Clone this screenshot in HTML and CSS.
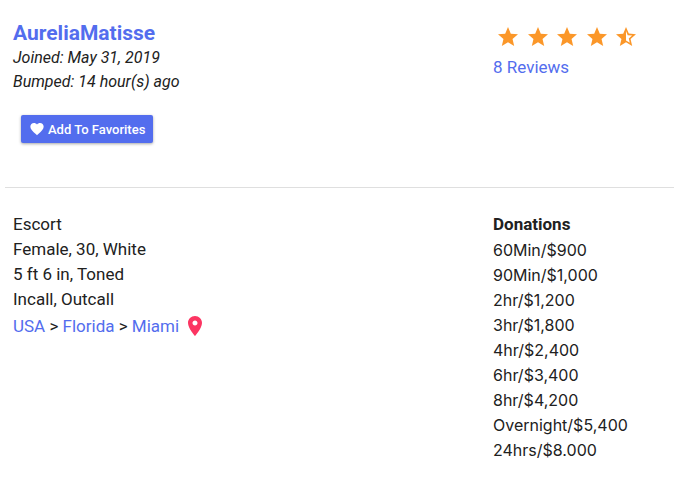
FILE: index.html
```
<!DOCTYPE html>
<html lang="en">
<head>
    <meta charset="UTF-8">
    <meta name="viewport" content="width=device-width, initial-scale=1">
    <title>AureliaMatisse</title>
    <link rel="stylesheet" href="styles.css">
</head>
<body>
    <!-- shared icon shapes -->
    <svg class="sprite" aria-hidden="true">
        <symbol id="star" viewBox="0 0 24 24">
            <path d="M12 17.27L18.18 21l-1.64-7.03L22 9.24l-7.19-.61L12 2 9.19 8.63 2 9.24l5.46 4.73L5.82 21z"/>
        </symbol>
        <symbol id="star-half" viewBox="0 0 24 24">
            <path d="M22 9.24l-7.19-.62L12 2 9.19 8.63 2 9.24l5.46 4.73L5.82 21 12 17.27 18.18 21l-1.63-7.03L22 9.24zM12 15.4V6.1l1.71 4.04 4.38.38-3.32 2.88 1 4.28L12 15.4z"/>
        </symbol>
    </svg>

    <header class="profile-header">
        <div class="profile">
            <h1><a href="#">AureliaMatisse</a></h1>
            <p class="meta">Joined: May 31, 2019</p>
            <p class="meta">Bumped: 14 hour(s) ago</p>
            <button type="button" class="favorite-btn">
                <svg viewBox="0 0 24 24" aria-hidden="true"><path d="M12 21.35l-1.45-1.32C5.4 15.36 2 12.28 2 8.5 2 5.42 4.42 3 7.5 3c1.74 0 3.41.81 4.5 2.09C13.09 3.81 14.76 3 16.5 3 19.58 3 22 5.42 22 8.5c0 3.78-3.4 6.86-8.55 11.54L12 21.35z"/></svg>
                Add To Favorites
            </button>
        </div>
        <div class="rating">
            <div class="stars" role="img" aria-label="4.5 out of 5 stars">
                <svg><use href="#star"/></svg>
                <svg><use href="#star"/></svg>
                <svg><use href="#star"/></svg>
                <svg><use href="#star"/></svg>
                <svg><use href="#star-half"/></svg>
            </div>
            <a href="#">8 Reviews</a>
        </div>
    </header>

    <main class="details">
        <section class="about">
            <p>Escort</p>
            <p>Female, 30, White</p>
            <p>5 ft 6 in, Toned</p>
            <p>Incall, Outcall</p>
            <p class="location">
                <span><a href="#">USA</a> &gt; <a href="#">Florida</a> &gt; <a href="#">Miami</a></span>
                <svg class="pin" viewBox="0 0 24 24" aria-hidden="true"><path d="M12 2C8.13 2 5 5.13 5 9c0 5.25 7 13 7 13s7-7.75 7-13c0-3.87-3.13-7-7-7zm0 9.5c-1.38 0-2.5-1.12-2.5-2.5s1.12-2.5 2.5-2.5 2.5 1.12 2.5 2.5-1.12 2.5-2.5 2.5z"/></svg>
            </p>
        </section>
        <section class="donations">
            <h2>Donations</h2>
            <ul>
                <li>60Min/$900</li>
                <li>90Min/$1,000</li>
                <li>2hr/$1,200</li>
                <li>3hr/$1,800</li>
                <li>4hr/$2,400</li>
                <li>6hr/$3,400</li>
                <li>8hr/$4,200</li>
                <li>Overnight/$5,400</li>
                <li>24hrs/$8.000</li>
            </ul>
        </section>
    </main>
</body>
</html>
```
FILE: styles.css
```
* {
    box-sizing: border-box;
}

body {
    margin: 0;
    padding-left: 5px;
    background-color: #fff;
    color: #212121;
    font-family: Roboto, sans-serif;
    font-size: 17px;
    line-height: 25px;
}

h1, h2, p, ul {
    margin: 0;
    padding: 0;
}

a {
    color: #536dee;
    text-decoration: none;
}

svg {
    fill: currentColor;
}

.sprite {
    display: none;
}

.profile-header, .details {
    display: grid;
    grid-template-columns: 1fr 181px;
    padding-left: 8px;
}

.profile-header {
    padding-top: 21px;
    padding-bottom: 44px;
    border-bottom: 1px solid #dfdfdf;
}

h1 {
    font-size: 21px;
    font-weight: 700;
    line-height: 25px;
}

.meta {
    font-size: 16px;
    font-style: italic;
    line-height: 24px;
}

.favorite-btn {
    display: flex;
    align-items: center;
    gap: 3px;
    height: 28px;
    margin: 21px 8px 0;
    padding: 0 8px;
    border: none;
    border-radius: 2px;
    background-color: #536dee;
    box-shadow: 0 1px 3px rgba(0, 0, 0, 0.35);
    color: #fff;
    font-family: inherit;
    font-size: 13px;
    font-weight: 500;
    cursor: pointer;
}

.favorite-btn svg {
    width: 16px;
    height: 16px;
}

.stars {
    display: flex;
    justify-content: space-between;
    width: 148px;
    padding: 4px 3px 6px;
    color: #fb9729;
}

.stars svg {
    width: 24px;
    height: 24px;
}

.details {
    padding-top: 24px;
}

.location {
    display: flex;
    align-items: center;
    gap: 4px;
    line-height: 28px;
}

.pin {
    width: 24px;
    height: 24px;
    color: #fc3562;
}

h2 {
    font-size: 17px;
    font-weight: 700;
    line-height: 25px;
}

ul {
    padding-top: 1px;
    font-family: Inter, sans-serif;
    font-size: 16px;
    list-style: none;
}
```
